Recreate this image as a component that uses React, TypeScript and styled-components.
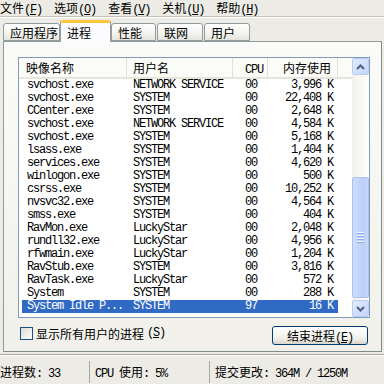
import React from 'react';
import styled, {createGlobalStyle} from 'styled-components';

const GlobalStyle = createGlobalStyle`
  html, body {
    margin: 0;
    padding: 0;
  }
  body {
    background: #ecebe5;
    font: 12px "Noto Sans CJK SC", sans-serif;
    color: #000;
  }
  #root {
    width: 384px;
    height: 384px;
    overflow: hidden;
  }
`;

type Proc = {name: string; user: string; cpu: string; mem: string};

const procs: Proc[] = [
  {name: 'svchost.exe', user: 'NETWORK SERVICE', cpu: '00', mem: '3,996 K'},
  {name: 'svchost.exe', user: 'SYSTEM', cpu: '00', mem: '22,408 K'},
  {name: 'CCenter.exe', user: 'SYSTEM', cpu: '00', mem: '2,648 K'},
  {name: 'svchost.exe', user: 'NETWORK SERVICE', cpu: '00', mem: '4,584 K'},
  {name: 'svchost.exe', user: 'SYSTEM', cpu: '00', mem: '5,168 K'},
  {name: 'lsass.exe', user: 'SYSTEM', cpu: '00', mem: '1,404 K'},
  {name: 'services.exe', user: 'SYSTEM', cpu: '00', mem: '4,620 K'},
  {name: 'winlogon.exe', user: 'SYSTEM', cpu: '00', mem: '500 K'},
  {name: 'csrss.exe', user: 'SYSTEM', cpu: '00', mem: '10,252 K'},
  {name: 'nvsvc32.exe', user: 'SYSTEM', cpu: '00', mem: '4,564 K'},
  {name: 'smss.exe', user: 'SYSTEM', cpu: '00', mem: '404 K'},
  {name: 'RavMon.exe', user: 'LuckyStar', cpu: '00', mem: '2,048 K'},
  {name: 'rundll32.exe', user: 'LuckyStar', cpu: '00', mem: '4,956 K'},
  {name: 'rfwmain.exe', user: 'LuckyStar', cpu: '00', mem: '1,204 K'},
  {name: 'RavStub.exe', user: 'SYSTEM', cpu: '00', mem: '3,816 K'},
  {name: 'RavTask.exe', user: 'LuckyStar', cpu: '00', mem: '572 K'},
  {name: 'System', user: 'SYSTEM', cpu: '00', mem: '288 K'},
  {name: 'System Idle P...', user: 'SYSTEM', cpu: '97', mem: '16 K'},
];

const tabs = [
  {label: '应用程序', w: 57},
  {label: '进程', w: 51, active: true},
  {label: '性能', w: 45},
  {label: '联网', w: 46},
  {label: '用户', w: 46},
];

const menus = [
  ['文件', 'F'],
  ['选项', 'O'],
  ['查看', 'V'],
  ['关机', 'U'],
  ['帮助', 'H'],
];

const TaskManager: React.FC = () => {
  return (
    <Window>
      <MenuBar>
        {menus.map(([t, k]) => (
          <MenuItem key={k}>
            {t}
            <Ascii>
              (<u>{k}</u>)
            </Ascii>
          </MenuItem>
        ))}
      </MenuBar>

      <TabStrip>
        {tabs.map((t) => (
          <Tab key={t.label} $w={t.w} $active={!!t.active}>
            {t.label}
          </Tab>
        ))}
      </TabStrip>

      <Panel>
        <ListBox>
          <ListMain>
            <Header>
              <HeadCell $w={108} $pad={7}>映像名称</HeadCell>
              <HeadCell $w={106} $pad={6}>用户名</HeadCell>
              <HeadCell $w={35} $pad={12}>
                <Ascii>CPU</Ascii>
              </HeadCell>
              <HeadCell $w={70} $pad={6} $right>
                内存使用
              </HeadCell>
            </Header>
            <Rows>
              {procs.map((p, i) => (
                <Row key={i} $selected={i === procs.length - 1}>
                  <Cell $w={105} $pad={5}>{p.name}</Cell>
                  <Cell $w={106} $pad={6}>{p.user}</Cell>
                  <Cell $w={35} $pad={12}>{p.cpu}</Cell>
                  <Cell $w={70} $pad={6} $right>
                    {p.mem}
                  </Cell>
                </Row>
              ))}
            </Rows>
          </ListMain>
          <ScrollBar>
            <ScrollBtn>
              <svg width="9" height="6" viewBox="0 0 9 6">
                <polyline points="1,5 4.5,1.5 8,5" fill="none" stroke="#4d6185" strokeWidth="2" />
              </svg>
            </ScrollBtn>
            <Track>
              <Thumb>
                <Grip />
                <Grip />
                <Grip />
                <Grip />
              </Thumb>
            </Track>
            <ScrollBtn>
              <svg width="9" height="6" viewBox="0 0 9 6">
                <polyline points="1,1 4.5,4.5 8,1" fill="none" stroke="#4d6185" strokeWidth="2" />
              </svg>
            </ScrollBtn>
          </ScrollBar>
        </ListBox>

        <Footer>
          <CheckLabel>
            <CheckBox />
            显示所有用户的进程
            <Ascii>
              (<u>S</u>)
            </Ascii>
          </CheckLabel>
          <XPButton>
            结束进程
            <Ascii>
              (<u>E</u>)
            </Ascii>
          </XPButton>
        </Footer>
      </Panel>

      <StatusBar>
        <StatusCell $w={90}>
          进程数<Ascii>: 33</Ascii>
        </StatusCell>
        <StatusCell $w={120}>
          <Ascii>CPU </Ascii>使用<Ascii>: 5%</Ascii>
        </StatusCell>
        <StatusCell $w={170} $last>
          提交更改<Ascii>: 364M / 1250M</Ascii>
        </StatusCell>
      </StatusBar>
    </Window>
  );
};

const Ascii = styled.span`
  font-family: "Liberation Mono", monospace;
  font-size: 12px;
  letter-spacing: -1.2px;
`;

const Window = styled.div`
  width: 384px;
  height: 384px;
  display: flex;
  flex-direction: column;
`;

const MenuBar = styled.div`
  display: flex;
  gap: 12px;
  height: 16px;
  line-height: 15px;
  border-bottom: 1px solid #c5c2b8;
  box-shadow: 0 1px 0 #fff;
`;

const MenuItem = styled.div`
  white-space: nowrap;
`;

const TabStrip = styled.div`
  display: flex;
  align-items: flex-end;
  height: 21px;
  margin-top: 3px;
  padding-left: 3px;
  position: relative;
  z-index: 1;
`;

const Tab = styled.div<{$w: number; $active: boolean}>`
  box-sizing: border-box;
  width: ${(p) => p.$w}px;
  height: ${(p) => (p.$active ? 22 : 18)}px;
  margin-right: ${(p) => (p.$active ? 0 : 1)}px;
  margin-bottom: ${(p) => (p.$active ? -1 : 0)}px;
  padding-left: 6px;
  line-height: ${(p) => (p.$active ? 19 : 17)}px;
  font-size: 12px;
  border: 1px solid #919b9c;
  border-bottom: ${(p) => (p.$active ? 'none' : '1px solid #919b9c')};
  border-radius: 3px 3px 0 0;
  background: ${(p) =>
    p.$active ? '#fcfcfe' : 'linear-gradient(#ffffff, #f3f3ef 60%, #e4e3dc)'};
  border-top: ${(p) => (p.$active ? '3px solid #ffc83c' : '1px solid #919b9c')};
  &:first-child {
    margin-right: 0;
  }
`;

const Panel = styled.div`
  box-sizing: border-box;
  height: 317px;
  margin: 0 2px 0 3px;
  padding: 15px 0 0 14px;
  border: 1px solid #919b9c;
  border-right-color: #7f8a8b;
  border-bottom-color: #7f8a8b;
  background: linear-gradient(#fbfbf9, #f1f0ea);
`;

const ListBox = styled.div`
  box-sizing: border-box;
  width: 352px;
  height: 261px;
  border: 1px solid #7f9db9;
  background: #fff;
  display: flex;
`;

const ListMain = styled.div`
  flex: 1;
  overflow: hidden;
`;

const Header = styled.div`
  display: flex;
  height: 19px;
  border-bottom: 2px solid #e6e5dc;
  background: #fbfbf8;
`;

const HeadCell = styled.div<{$w: number; $pad: number; $right?: boolean}>`
  box-sizing: border-box;
  flex: none;
  width: ${(p) => p.$w}px;
  line-height: 20px;
  text-align: ${(p) => (p.$right ? 'right' : 'left')};
  padding: ${(p) => (p.$right ? `0 ${p.$pad}px 0 0` : `0 0 0 ${p.$pad}px`)};
  border-right: 1px solid #e2e1d9;
  white-space: nowrap;
`;

const Rows = styled.div`
  padding-left: 3px;
`;

const Row = styled.div<{$selected: boolean}>`
  display: flex;
  width: 316px;
  height: 13px;
  line-height: 13px;
  font-family: "Liberation Mono", monospace;
  font-size: 12px;
  letter-spacing: -1.2px;
  background: ${(p) => (p.$selected ? '#316ac5' : 'transparent')};
  color: ${(p) => (p.$selected ? '#fff' : '#000')};
`;

const Cell = styled.div<{$w: number; $pad: number; $right?: boolean}>`
  box-sizing: border-box;
  flex: none;
  width: ${(p) => p.$w}px;
  text-align: ${(p) => (p.$right ? 'right' : 'left')};
  padding: ${(p) => (p.$right ? `0 ${p.$pad - 1}px 0 0` : `0 0 0 ${p.$pad}px`)};
  white-space: pre;
  overflow: hidden;
`;

const ScrollBar = styled.div`
  width: 17px;
  display: flex;
  flex-direction: column;
  background: linear-gradient(90deg, #f3f1ec, #fefefb);
`;

const ScrollBtn = styled.div`
  box-sizing: border-box;
  height: 17px;
  border: 1px solid #b8ccf4;
  border-radius: 2px;
  background: linear-gradient(135deg, #e4ecfd, #c3d4fb);
  display: flex;
  align-items: center;
  justify-content: center;
`;

const Track = styled.div`
  flex: 1;
  display: flex;
  flex-direction: column;
  justify-content: flex-end;
  padding-bottom: 2px;
`;

const Thumb = styled.div`
  box-sizing: border-box;
  height: 121px;
  border: 1px solid #abc1ee;
  border-radius: 2px;
  background: linear-gradient(90deg, #cfdcfc, #bccff9 70%, #c8d7fb);
  display: flex;
  flex-direction: column;
  align-items: center;
  justify-content: center;
  gap: 1px;
`;

const Grip = styled.div`
  width: 7px;
  height: 1px;
  background: #eef3fe;
  border-bottom: 1px solid #8cabe8;
`;

const Footer = styled.div`
  display: flex;
  justify-content: space-between;
  align-items: center;
  width: 352px;
  margin-top: 8px;
  padding: 0 2px;
  box-sizing: border-box;
  height: 18px;
`;

const CheckLabel = styled.label`
  display: flex;
  align-items: center;
  gap: 3px;
  margin-top: -4px;
  white-space: nowrap;
`;

const CheckBox = styled.span`
  box-sizing: border-box;
  width: 13px;
  height: 13px;
  border: 1px solid #1c5180;
  background: linear-gradient(135deg, #dcdcd7, #ffffff);
`;

const XPButton = styled.div`
  box-sizing: border-box;
  width: 96px;
  height: 19px;
  border: 1px solid #003c74;
  border-radius: 3px;
  background: linear-gradient(#ffffff, #f0f0ea 70%, #d8d5c9);
  text-align: center;
  line-height: 17px;
  white-space: nowrap;
`;

const StatusBar = styled.div`
  display: flex;
  margin-top: 2px;
  padding-top: 6px;
  border-top: 1px solid #aca899;
  box-shadow: inset 0 1px 0 #fff;
  height: 24px;
`;

const StatusCell = styled.div<{$w: number; $last?: boolean}>`
  box-sizing: border-box;
  width: ${(p) => p.$w}px;
  padding-left: ${(p) => (p.$w === 90 ? 0 : 5)}px;
  height: 22px;
  line-height: 22px;
  border-right: ${(p) => (p.$last ? 'none' : '1px solid #aca899')};
  white-space: nowrap;
`;

export default function App() {
  return (
    <>
      <GlobalStyle />
      <TaskManager />
    </>
  );
}
